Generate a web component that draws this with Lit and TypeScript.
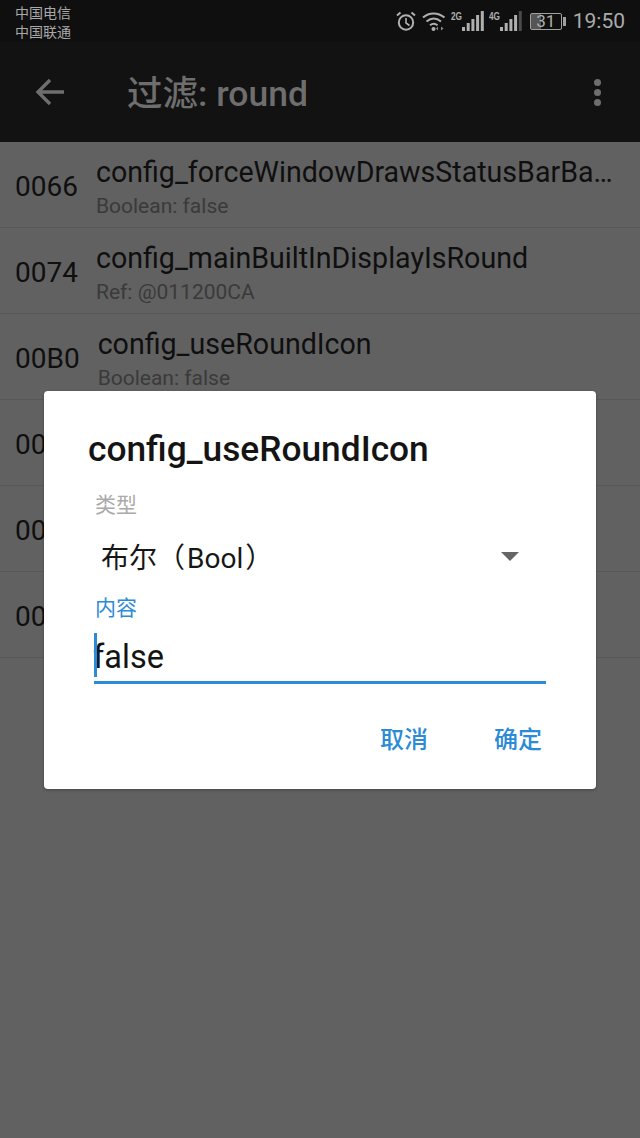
import { LitElement, html, svg, css } from "lit";
import { customElement } from "lit/decorators.js";

// the last three rows are covered by the dialog, only "00" of them shows
const ROWS = [
  { id: "0066", name: "config_forceWindowDrawsStatusBarBackground", sub: "Boolean: false" },
  { id: "0074", name: "config_mainBuiltInDisplayIsRound", sub: "Ref: @011200CA" },
  { id: "00B0", name: "config_useRoundIcon", sub: "Boolean: false" },
  { id: "00" },
  { id: "00" },
  { id: "00" },
];

@customElement("app-root")
export class AppRoot extends LitElement {
  static styles = css`
    :host {
      display: block;
      position: relative;
      width: 640px;
      height: 1138px;
      overflow: hidden;
      background: #616161;
      font-family: Roboto, "Noto Sans CJK SC", sans-serif;
    }

    .status {
      height: 42px;
      background: #0f0f0f;
      display: flex;
      align-items: center;
      padding: 0 15px;
      box-sizing: border-box;
      color: #a8a8a8;
    }
    .carriers {
      font-family: "Noto Sans CJK SC", sans-serif;
      font-size: 14px;
      line-height: 19px;
      flex: 1;
      margin-top: 1px;
    }
    .icons {
      display: flex;
      align-items: center;
    }
    .icons svg {
      display: block;
    }
    .alarm {
      margin-right: 6px;
    }
    .wifi {
      margin-right: 5px;
    }
    .signal2 {
      margin-left: 5px;
    }
    .battery {
      width: 32px;
      height: 17px;
      margin-left: 8px;
      border: 1px solid #a0a0a0;
      border-radius: 2px;
      box-sizing: border-box;
      display: flex;
      align-items: center;
      justify-content: center;
      font-size: 17px;
      color: #b0b0b0;
      background: linear-gradient(to right, #555 0 32%, transparent 32%);
    }
    .nub {
      width: 3px;
      height: 9px;
      margin-left: 1px;
      background: #a0a0a0;
    }
    .time {
      font-size: 21px;
      margin-left: 7px;
      color: #ababab;
    }

    .bar {
      height: 100px;
      background: #121212;
      display: flex;
      align-items: center;
      padding: 0 39px 0 35px;
      box-sizing: border-box;
    }
    .bar .title {
      flex: 1;
      margin-left: 62px;
      margin-top: -3px;
      font-size: 35.5px;
      font-weight: 500;
      white-space: nowrap;
      color: #6e6e6e;
    }
    .dots {
      display: flex;
      flex-direction: column;
      gap: 3px;
    }
    .dots i {
      display: block;
      width: 7px;
      height: 7px;
      border-radius: 50%;
      background: #6e6e6e;
    }

    .row {
      height: 86px;
      box-sizing: border-box;
      display: flex;
      align-items: center;
      gap: 18px;
      padding: 0 24px 0 15px;
      border-bottom: 1px solid #585858;
      color: #0f0f0f;
    }
    .id {
      font-size: 28px;
      flex: none;
      padding-top: 3px;
    }
    .text {
      min-width: 0;
      flex: 1;
      padding-top: 6px;
    }
    .name {
      font-size: 28.6px;
      line-height: 34px;
      white-space: nowrap;
      overflow: hidden;
      text-overflow: ellipsis;
    }
    .sub {
      font-size: 21px;
      line-height: 28px;
      margin-top: 3px;
      color: #3a3a3a;
    }

    .dialog {
      position: absolute;
      left: 44px;
      top: 391px;
      width: 552px;
      height: 398px;
      box-sizing: border-box;
      background: #fff;
      border-radius: 4px;
      box-shadow: 0 1px 3px rgba(0, 0, 0, 0.3);
      padding: 36px 50px 0 50px;
      display: flex;
      flex-direction: column;
    }
    .dialog h2 {
      margin: 0 0 0 -6px;
      font-size: 35.3px;
      line-height: 44px;
      font-weight: 500;
      white-space: nowrap;
      color: #141414;
    }
    .label {
      font-family: "Noto Sans CJK SC", sans-serif;
      font-size: 21px;
      line-height: 28px;
      margin-top: 18px;
      margin-left: 1px;
      color: #aaaaaa;
    }
    .select {
      height: 72px;
      padding: 3px 27px 0 7px;
      display: flex;
      align-items: center;
      justify-content: space-between;
      font-size: 28px;
      color: #161616;
    }
    .select b {
      font-weight: 400;
      padding: 0 2px;
    }
    .arrow {
      width: 0;
      height: 0;
      margin-top: 1px;
      border-left: 9px solid transparent;
      border-right: 9px solid transparent;
      border-top: 9px solid #666;
    }
    .label.blue {
      margin-top: 0;
      color: #2b8bd6;
    }
    .input {
      position: relative;
      height: 48px;
      margin-top: 13px;
      border-bottom: 3px solid #2b8bd6;
      font-size: 32.5px;
      line-height: 48px;
      color: #141414;
      text-indent: -1px;
    }
    .cursor {
      position: absolute;
      left: 0;
      top: 0;
      width: 3px;
      height: 44px;
      background: #2b8bd6;
    }
    .actions {
      display: flex;
      justify-content: flex-end;
      gap: 66px;
      margin-top: 36px;
      padding-right: 4px;
      font-family: "Noto Sans CJK SC", sans-serif;
      font-size: 24px;
      line-height: 36px;
      font-weight: 500;
      color: #2b8bd6;
    }
  `;

  private signal(label: string, level: number, cls = "") {
    const bars = [0, 1, 2, 3, 4].map((i) => {
      const h = 4 + i * 4;
      return svg`<rect x=${11 + i * 4.7} y=${21 - h} width="3" height=${h} fill=${i < level ? "#b0b0b0" : "#4a4a4a"} />`;
    });
    return html`<svg class=${cls} width="33" height="22" viewBox="0 0 33 22">
      <text x="0" y="10" font-family="Liberation Sans" font-size="11" font-weight="700" fill="#b0b0b0" textLength="11" lengthAdjust="spacingAndGlyphs">${label}</text>
      ${bars}
    </svg>`;
  }

  render() {
    return html`
      <div class="status">
        <div class="carriers">中国电信<br />中国联通</div>
        <div class="icons">
          <svg class="alarm" width="20" height="20" viewBox="0 0 20 20" fill="none" stroke="#b0b0b0" stroke-width="2">
            <circle cx="10" cy="11.5" r="7.2" />
            <path d="M10 7v5l3.5 2.5" stroke-width="1.6" />
            <path d="M1 4.5 4.5 1.5M19 4.5 15.5 1.5" />
          </svg>
          <svg class="wifi" width="24" height="20" viewBox="0 0 24 20" fill="none" stroke="#b0b0b0" stroke-width="2">
            <path d="M1 6.5C7 1 16 1 22.5 6.5" />
            <path d="M4.5 10.500c4.500-3.800 10-3.800 14.500 0" />
            <path d="M8 14.300c2.500-2 5-2 7.500 0" />
            <circle cx="11.500" cy="18" r="2" fill="#b0b0b0" stroke="none" />
            <path d="M16 15.500v4l-2-2zM19 15.500v4l2.500-2z" fill="#8a8a8a" stroke="none" />
          </svg>
          ${this.signal("2G", 5)} ${this.signal("4G", 4, "signal2")}
          <div class="battery">31</div>
          <div class="nub"></div>
          <div class="time">19:50</div>
        </div>
      </div>
      <div class="bar">
        <svg width="30" height="28" viewBox="0 0 30 28" fill="none" stroke="#6e6e6e" stroke-width="3.400">
          <path d="M29 14H3M15 2 3 14l12 12" />
        </svg>
        <div class="title">过滤: round</div>
        <div class="dots"><i></i><i></i><i></i></div>
      </div>
      ${ROWS.map(
        (r) => html`<div class="row">
          <div class="id">${r.id}</div>
          ${r.name
            ? html`<div class="text">
                <div class="name">${r.name}</div>
                <div class="sub">${r.sub}</div>
              </div>`
            : ""}
        </div>`
      )}
      <div class="dialog">
        <h2>config_useRoundIcon</h2>
        <div class="label">类型</div>
        <div class="select">
          <span>布尔（<b>Bool</b>）</span>
          <div class="arrow"></div>
        </div>
        <div class="label blue">内容</div>
        <div class="input"><span class="cursor"></span>false</div>
        <div class="actions"><span>取消</span><span>确定</span></div>
      </div>
    `;
  }
}
